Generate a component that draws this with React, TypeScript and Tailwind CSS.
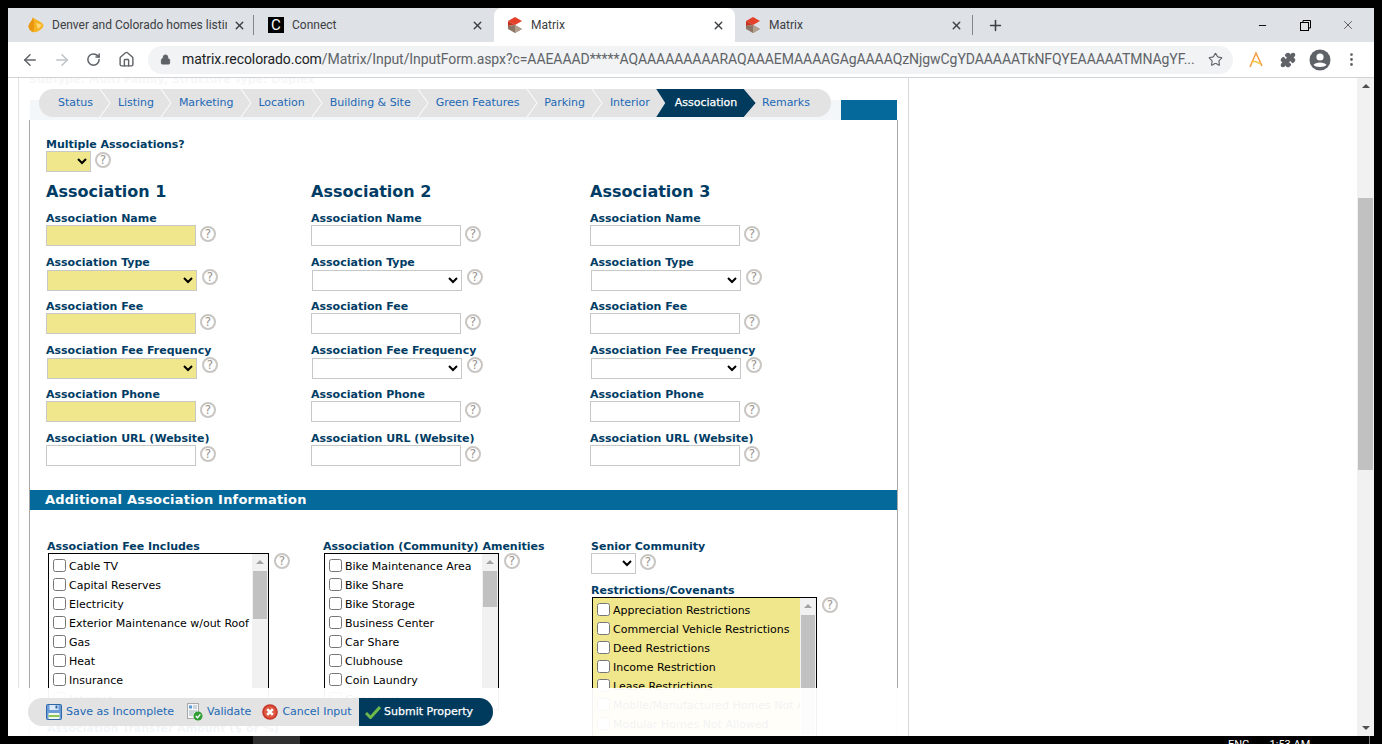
import React from "react";
import { ArrowLeft, ArrowRight, RotateCw, Home, Star, Lock, MoreVertical, Plus, X, Minus, Puzzle } from "lucide-react";

const NAVY = "text-[#003c64]";

function Help({ className = "" }: { className?: string }) {
  return (
    <span className={`inline-flex h-4 w-4 shrink-0 items-center justify-center rounded-full border-2 border-[#c8c5c2] bg-white text-[12px] leading-none text-[#9a948e] ${className}`}>?</span>
  );
}

function Gem() {
  return (
    <svg width="16" height="16" viewBox="0 0 16 16" className="shrink-0">
      <path d="M5 0.5 C8 3 12 4 15 7 C16 9 15 11 12 13 C9 15 7 15.5 5 15 C2 14 0.5 11 0.5 9 C1 6 4 4 5 0.5 Z" fill="#f5b324" />
      <path d="M5 0.5 C6 4 7 8 5 15 C2 14 0.5 11 0.5 9 C1 6 4 4 5 0.5 Z" fill="#e8960f" />
      <path d="M8 6 L14 8 L10 12 Z" fill="#fdd978" />
    </svg>
  );
}

function MatrixLogo() {
  return (
    <svg width="16" height="18" viewBox="0 0 16 18" className="shrink-0">
      <path d="M1 5 L8 1 L15 5 L8 9 Z" fill="#e5402a" />
      <path d="M1 5 L8 9 L1 10 Z" fill="#c5331f" />
      <path d="M1 10 L8 9 L15 13 L8 17 L1 13 Z" fill="#8c7565" />
      <path d="M8 9 L15 13 L8 17 Z" fill="#b09e8e" />
    </svg>
  );
}

function Tab({ icon, title, active, w, sep }: { icon: React.ReactNode; title: string; active?: boolean; w: string; sep?: boolean }) {
  return (
    <div className={`relative flex h-full items-center ${w} ${active ? "rounded-t-lg bg-white" : ""}`}>
      {icon}
      <span className="ml-[8px] min-w-0 flex-1 overflow-hidden whitespace-nowrap text-[12px] text-[#3c4043]">{title}</span>
      <X size={13} strokeWidth={2.5} className="ml-[6px] shrink-0 text-[#3c4043]" />
      {sep && <span className="absolute right-0 top-[7px] h-[20px] w-px bg-[#80868b]" />}
    </div>
  );
}

function ChromeBar() {
  return (
    <div className="font-['Roboto',sans-serif]">
      <div className="flex h-[34px] items-center bg-[#dee1e6] pl-[10px]">
        <Tab w="w-[236px] pl-[10px] pr-[8px]" sep icon={<Gem />} title="Denver and Colorado homes listings" />
        <Tab w="w-[240px] pl-[14px] pr-[10px]" icon={<span className="flex h-4 w-4 shrink-0 items-center justify-center bg-black text-[15px] font-normal leading-none text-white">C</span>} title="Connect" />
        <Tab w="w-[241px] pl-[13px] pr-[10px]" active icon={<MatrixLogo />} title="Matrix" />
        <Tab w="w-[238px] pl-[10px] pr-[10px]" sep icon={<MatrixLogo />} title="Matrix" />
        <Plus size={17} strokeWidth={2.2} className="ml-[14px] text-[#3c4043]" />
        <div className="ml-auto flex items-center pr-[19px]">
          <Minus size={11} strokeWidth={2} className="text-black" />
          <svg width="11" height="11" viewBox="0 0 11 11" fill="none" stroke="#000" strokeWidth="1" className="ml-[32px]"><rect x="0.5" y="2.5" width="8" height="8" fill="#dee1e6" /><path d="M3 2.5 V0.5 H10.5 V8 H8.5" /></svg>
          <X size={14} strokeWidth={1} className="ml-[30px] text-black" />
        </div>
      </div>
      <div className="flex h-[36px] items-center border-b border-[#d0d2d5] bg-white pl-[13px]">
        <ArrowLeft size={18} className="text-[#5f6368]" />
        <ArrowRight size={18} className="ml-[14px] text-[#bfc2c5]" />
        <RotateCw size={15} strokeWidth={2.4} className="ml-[15px] text-[#5f6368]" />
        <Home size={17} className="ml-[17px] text-[#5f6368]" />
        <div className="ml-[13px] flex h-[28px] w-[1085px] shrink-0 items-center rounded-full bg-[#f1f3f4] pl-[12px] pr-[10px]">
          <Lock size={11} fill="#5f6368" className="shrink-0 text-[#5f6368]" />
          <span className="ml-[11px] min-w-0 flex-1 whitespace-nowrap text-[14px] tracking-[-0.07px] text-[#5f6368]"><span className="text-[#202124]">matrix.recolorado.com</span>/Matrix/Input/InputForm.aspx?c=AAEAAAD*****AQAAAAAAAAARAQAAAEMAAAAGAgAAAAQzNjgwCgYDAAAAATkNFQYEAAAAATMNAgYF...</span>
          <Star size={15} strokeWidth={1.8} className="shrink-0 text-[#5f6368]" />
        </div>
        <svg width="16" height="18" viewBox="0 0 16 18" fill="none" className="ml-[15px] shrink-0"><path d="M2 16 L8 2 L14 15" stroke="#f59b3c" strokeWidth="1.5" /><path d="M4 11 C7 9 10 12 13 13" stroke="#f4c542" strokeWidth="1.5" /></svg>
        <Puzzle size={16} fill="#5f6368" className="ml-[16px] shrink-0 text-[#5f6368]" />
        <svg width="22" height="22" viewBox="0 0 22 22" className="ml-[13px] shrink-0"><circle cx="11" cy="11" r="10.5" fill="#5f6368" /><circle cx="11" cy="8" r="3.6" fill="#fff" /><path d="M4.5 16 C6 12.6 16 12.6 17.5 16 C15.5 18.6 6.5 18.6 4.5 16 Z" fill="#fff" /></svg>
        <MoreVertical size={17} className="ml-[12px] shrink-0 text-[#5f6368]" />
      </div>
    </div>
  );
}

const steps = ["Status", "Listing", "Marketing", "Location", "Building & Site", "Green Features", "Parking", "Interior", "Association", "Remarks"];

function Steps() {
  return (
    <div className="relative z-10 ml-[20px] flex h-[28px] w-[792px] items-center rounded-full bg-[#e3e3e3] pl-[6.5px] text-[11px] tracking-[-0.03px] font-['DejaVu_Sans',sans-serif]">
      {steps.map((s, i) => {
        const active = s === "Association";
        return (
          <div key={s} className={`relative flex h-full items-center whitespace-nowrap px-[12.5px] pt-[1px] ${active ? "text-white [-webkit-text-stroke:0.25px_white]" : "text-[#2268b5]"}`}>
            {active && <span className="absolute bottom-0 left-[-6px] right-[-6px] top-0 bg-[#003a5d] [clip-path:polygon(0_0,88%_0,100%_50%,88%_100%,0_100%,9%_50%)]" />}
            <span className="relative">{s}</span>
            {i < steps.length - 1 && !active && steps[i + 1] !== "Association" && (
              <svg width="12" height="28" viewBox="0 0 12 28" className="absolute right-[-6px] top-0" fill="none"><path d="M1 0 L11 14 L1 28" stroke="#fff" strokeWidth="1" /></svg>
            )}
          </div>
        );
      })}
    </div>
  );
}

function Label({ children }: { children: React.ReactNode }) {
  return <div className={`whitespace-nowrap text-[11px] font-bold leading-[13px] ${NAVY}`}>{children}</div>;
}

function Field({ label, type, req }: { label: string; type: "text" | "select"; req?: boolean }) {
  const bg = req ? "bg-[#f0e68c]" : "bg-white";
  return (
    <div className="h-[44px]">
      <Label>{label}</Label>
      {type === "text" ? (
        <div className="flex items-start">
          <input type="text" className={`h-[21px] w-[150px] border border-[#c8c8c8] ${bg}`} />
          <Help className="ml-[4px] mt-[1px]" />
        </div>
      ) : (
        <div className="flex items-start">
          <select className={`ml-[1px] mt-[1px] h-[21px] w-[150px] border border-[#c8c8c8] text-black ${bg}`}><option></option></select>
          <Help className="ml-[5px]" />
        </div>
      )}
    </div>
  );
}

function AssocCol({ n, req, w }: { n: number; req?: boolean; w: string }) {
  return (
    <div className={w}>
      <h2 className={`mb-[9px] h-[22px] text-[16px] font-bold leading-[22px] ${NAVY}`}>Association {n}</h2>
      <Field label="Association Name" type="text" req={req} />
      <Field label="Association Type" type="select" req={req} />
      <Field label="Association Fee" type="text" req={req} />
      <Field label="Association Fee Frequency" type="select" req={req} />
      <Field label="Association Phone" type="text" req={req} />
      <Field label="Association URL (Website)" type="text" />
    </div>
  );
}

function CheckList({ items, w, thumb, req }: { items: string[]; w: string; thumb: string; req?: boolean }) {
  return (
    <div className={`relative ml-[1px] h-[157px] overflow-hidden border border-black ${w} ${req ? "bg-[#f0e68c]" : "bg-white"}`}>
      <div className="pl-[4px] pt-[4px]">
        {items.map((t) => (
          <label key={t} className="flex h-[19px] items-center whitespace-nowrap text-[11px] text-black">
            <input type="checkbox" className="m-0 mb-[4px] h-[13px] w-[13px] shrink-0" />
            <span className="ml-[3px]">{t}</span>
          </label>
        ))}
      </div>
      <div className="absolute bottom-0 right-0 top-0 w-[16px] bg-[#f1f1f1]">
        <div className="mx-auto mt-[6px] h-0 w-0 border-x-[4px] border-b-[4px] border-x-transparent border-b-[#a3a3a3]" />
        <div className={`mx-auto mt-[7px] w-[14px] bg-[#c1c1c1] ${thumb}`} />
      </div>
    </div>
  );
}

function Icon({ kind }: { kind: "save" | "validate" | "cancel" | "submit" }) {
  if (kind === "save")
    return (
      <svg width="16" height="16" viewBox="0 0 16 16" className="shrink-0"><rect x="0.5" y="0.5" width="15" height="15" rx="1" fill="#6a9cd8" stroke="#2f66a8" /><rect x="3.5" y="1" width="9" height="5" fill="#dbe8f6" /><rect x="9.5" y="1.5" width="2" height="3" fill="#2f66a8" /><rect x="2.5" y="9" width="11" height="6" fill="#f3f7e8" /><rect x="2.5" y="11" width="11" height="2" fill="#8cc65c" /></svg>
    );
  if (kind === "validate")
    return (
      <svg width="16" height="18" viewBox="0 0 16 18" className="shrink-0"><rect x="0.5" y="0.5" width="11" height="15" fill="#f6f6f6" stroke="#a9a9a9" /><rect x="2" y="2.5" width="3" height="3" fill="#5b9bd5" /><path d="M6 3 H10 M6 5 H10 M2 8 H10 M2 10 H7 M2 12 H6" stroke="#a0b0c0" /><circle cx="11" cy="13" r="4.5" fill="#2e9e34" /><path d="M8.8 13 L10.5 14.8 L13.4 11.4" stroke="#fff" strokeWidth="1.4" fill="none" /></svg>
    );
  if (kind === "cancel")
    return (
      <svg width="16" height="16" viewBox="0 0 16 16" className="shrink-0"><circle cx="8" cy="8" r="7.8" fill="#c9372c" /><circle cx="8" cy="8" r="6" fill="#de5a42" /><path d="M5.2 5.2 L10.8 10.8 M10.8 5.2 L5.2 10.8" stroke="#fff" strokeWidth="2.6" /></svg>
    );
  return (
    <svg width="16" height="14" viewBox="0 0 16 14" className="shrink-0"><path d="M1 8 L5.5 12.5 L15 2" stroke="#6cb84a" strokeWidth="3" fill="none" /></svg>
  );
}

function FooterBar() {
  return (
    <div className="absolute bottom-0 left-[10px] top-[610px] w-[880px] bg-white/95">
      <div className="ml-[10px] mt-[10px] flex h-[28px] w-[465px] items-center rounded-full bg-[#e3e3e3] text-[11px]">
        <div className="ml-[18px] flex items-center gap-[4px] text-[#2268b5]"><Icon kind="save" /><span>Save as Incomplete</span></div>
        <div className="ml-[13px] flex items-center gap-[4px] text-[#2268b5]"><Icon kind="validate" /><span>Validate</span></div>
        <div className="ml-[11px] flex items-center gap-[4px] text-[#2268b5]"><Icon kind="cancel" /><span>Cancel Input</span></div>
        <div className="ml-auto flex h-full w-[134px] items-center gap-[3px] rounded-r-full bg-[#003a5d] pl-[6px] text-white [-webkit-text-stroke:0.25px_white]"><Icon kind="submit" /><span>Submit Property</span></div>
      </div>
    </div>
  );
}

function Scrollbar() {
  return (
    <div className="flex h-full w-[17px] shrink-0 flex-col items-center bg-[#f1f1f1]">
      <div className="mt-[6px] h-0 w-0 border-x-[4px] border-b-[4px] border-x-transparent border-b-[#505050]" />
      <div className="mt-[110px] h-[272px] w-[15px] bg-[#c1c1c1]" />
      <div className="mb-[6px] mt-auto h-0 w-0 border-x-[4px] border-t-[4px] border-x-transparent border-t-[#505050]" />
    </div>
  );
}

export default function App() {
  return (
    <div className="flex h-[744px] w-[1382px] flex-col overflow-hidden bg-black px-[8px] pt-[8px]">
      <ChromeBar />
      <div className="flex h-[658px] shrink-0 bg-white font-['DejaVu_Sans',sans-serif]">
        <div className="relative h-full w-[901px] shrink-0 overflow-hidden border-r border-[#d8d8d8]">
          <div className="ml-[10px] h-full border-l border-[#e2e2e2]">
            <div className="h-[11px] overflow-hidden pl-[10px] text-[11px] font-bold leading-[4px] text-[#f7f7f7]">Subtype: Multi Family, Structure Type: Duplex</div>
            <Steps />
            <div className="-mt-[17px] ml-[11px] flex h-[20px] w-[867px] bg-[#f3f7fa]">
              <div className="ml-auto h-full w-[56px] bg-[#05699b]" />
            </div>
            <div className="ml-[10px] h-[700px] w-[869px] border-x border-[#a8a8a8]">
              <div className="ml-[16px] pt-[18px]">
                <Label>Multiple Associations?</Label>
                <div className="flex items-start">
                  <select className="h-[21px] w-[45px] border border-[#c8c8c8] bg-[#f0e68c] text-black"><option></option></select>
                  <Help className="ml-[4px] mt-[1px]" />
                </div>
                <div className="mt-[9px] flex">
                  <AssocCol n={1} req w="w-[265px]" />
                  <AssocCol n={2} w="w-[279px]" />
                  <AssocCol n={3} w="w-[280px]" />
                </div>
              </div>
              <div className="mt-[14px] h-[20px] bg-[#05699b] pl-[15px] text-[13px] font-bold leading-[19px] tracking-[0.2px] text-white">Additional Association Information</div>
              <div className="ml-[17px] mt-[30px] flex">
                <div className="w-[276px]">
                  <Label>Association Fee Includes</Label>
                  <div className="flex items-start">
                    <CheckList w="w-[221px]" thumb="h-[48px]" items={["Cable TV", "Capital Reserves", "Electricity", "Exterior Maintenance w/out Roof", "Gas", "Heat", "Insurance", "Internet"]} />
                    <Help className="ml-[5px]" />
                  </div>
                  <div className="mt-[11px] text-[11px] font-bold text-[#003c64]">Association Transfer Amount ($ or %)</div>
                </div>
                <div className="w-[268px]">
                  <Label>Association (Community) Amenities</Label>
                  <div className="flex items-start">
                    <CheckList w="w-[175px]" thumb="h-[36px]" items={["Bike Maintenance Area", "Bike Share", "Bike Storage", "Business Center", "Car Share", "Clubhouse", "Coin Laundry", "Concierge"]} />
                    <Help className="ml-[5px]" />
                  </div>
                </div>
                <div>
                  <Label>Senior Community</Label>
                  <div className="flex items-start">
                    <select className="h-[21px] w-[45px] border border-[#c8c8c8] bg-white text-black"><option></option></select>
                    <Help className="ml-[4px] mt-[1px]" />
                  </div>
                  <div className="mt-[10px]"><Label>Restrictions/Covenants</Label></div>
                  <div className="flex items-start">
                    <CheckList req w="w-[225px]" thumb="h-[120px]" items={["Appreciation Restrictions", "Commercial Vehicle Restrictions", "Deed Restrictions", "Income Restriction", "Lease Restrictions", "Mobile/Manufactured Homes Not Allowed", "Modular Homes Not Allowed"]} />
                    <Help className="ml-[5px]" />
                  </div>
                </div>
              </div>
            </div>
          </div>
          <FooterBar />
        </div>
        <div className="flex-1 bg-white" />
        <Scrollbar />
      </div>
      <div className="relative h-[8px] shrink-0 overflow-hidden bg-black font-['Roboto',sans-serif]">
        <div className="absolute left-[245px] top-0 h-full w-[47px] bg-[#2f2f2f]" />
        <div className="absolute left-[1220px] top-[3px] flex gap-[20px] whitespace-nowrap text-[11px] leading-[12px] text-white"><span>ENG</span><span>1:53 AM</span></div>
        <div className="absolute left-[1361px] top-0 h-full w-px bg-[#777777]" />
      </div>
    </div>
  );
}
